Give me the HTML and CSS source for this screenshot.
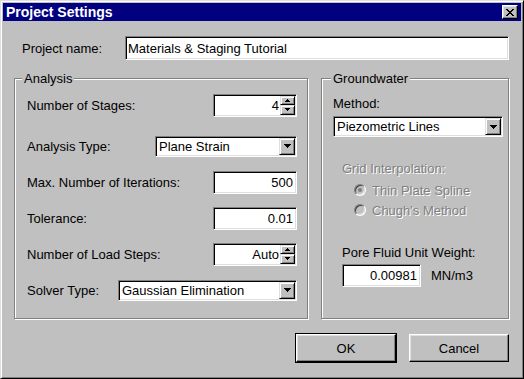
FILE: index.html
```html
<!DOCTYPE html>
<html lang="en">
<head>
  <meta charset="UTF-8" />
  <title>Project Settings</title>
  <link rel="stylesheet" href="styles.css">
</head>
<body>

  <div class="window">
    <div class="titlebar">
      <span class="title">Project Settings</span>
      <button class="close-btn" aria-label="Close">
        <svg width="8" height="7" viewBox="0 0 8 7" shape-rendering="crispEdges">
          <path fill="#000" d="M0 0h2v1H0z M6 0h2v1H6z M1 1h2v1H1z M5 1h2v1H5z M2 2h4v1H2z M3 3h2v1H3z M2 4h4v1H2z M1 5h2v1H1z M5 5h2v1H5z M0 6h2v1H0z M6 6h2v1H6z" />
        </svg>
      </button>
    </div>

    <div class="client">
      <div class="name-row">
        <label for="project-name">Project name:</label>
        <input id="project-name" class="field name-field" type="text" value="Materials &amp; Staging Tutorial" />
      </div>

      <div class="groups">
        <!-- Analysis -->
        <div class="group analysis">
          <div class="group-title">Analysis</div>
          <div class="rows">
            <div class="row">
              <label>Number of Stages:</label>
              <div class="spin">
                <input type="text" value="4" />
                <div class="spin-buttons">
                  <span class="spin-btn">
                    <svg width="5" height="3" viewBox="0 0 5 3" shape-rendering="crispEdges"><path fill="#000" d="M2 0h1v1H2z M1 1h3v1H1z M0 2h5v1H0z" /></svg>
                  </span>
                  <span class="spin-btn">
                    <svg width="5" height="3" viewBox="0 0 5 3" shape-rendering="crispEdges"><path fill="#000" d="M0 0h5v1H0z M1 1h3v1H1z M2 2h1v1H2z" /></svg>
                  </span>
                </div>
              </div>
            </div>

            <div class="row">
              <label>Analysis Type:</label>
              <div class="combo combo-type">
                <span class="combo-value">Plane Strain</span>
                <span class="combo-btn">
                  <svg width="7" height="4" viewBox="0 0 7 4" shape-rendering="crispEdges"><path fill="#000" d="M0 0h7v1H0z M1 1h5v1H1z M2 2h3v1H2z M3 3h1v1H3z" /></svg>
                </span>
              </div>
            </div>

            <div class="row">
              <label>Max. Number of Iterations:</label>
              <input class="field edit" type="text" value="500" />
            </div>

            <div class="row">
              <label>Tolerance:</label>
              <input class="field edit" type="text" value="0.01" />
            </div>

            <div class="row">
              <label>Number of Load Steps:</label>
              <div class="spin">
                <input type="text" value="Auto" />
                <div class="spin-buttons">
                  <span class="spin-btn">
                    <svg width="5" height="3" viewBox="0 0 5 3" shape-rendering="crispEdges"><path fill="#000" d="M2 0h1v1H2z M1 1h3v1H1z M0 2h5v1H0z" /></svg>
                  </span>
                  <span class="spin-btn">
                    <svg width="5" height="3" viewBox="0 0 5 3" shape-rendering="crispEdges"><path fill="#000" d="M0 0h5v1H0z M1 1h3v1H1z M2 2h1v1H2z" /></svg>
                  </span>
                </div>
              </div>
            </div>

            <div class="row">
              <label>Solver Type:</label>
              <div class="combo combo-solver">
                <span class="combo-value">Gaussian Elimination</span>
                <span class="combo-btn">
                  <svg width="7" height="4" viewBox="0 0 7 4" shape-rendering="crispEdges"><path fill="#000" d="M0 0h7v1H0z M1 1h5v1H1z M2 2h3v1H2z M3 3h1v1H3z" /></svg>
                </span>
              </div>
            </div>
          </div>
        </div>

        <!-- Groundwater -->
        <div class="group groundwater">
          <div class="group-title">Groundwater</div>
          <div class="gw-body">
            <div class="method-label">Method:</div>
            <div class="combo combo-method">
              <span class="combo-value">Piezometric Lines</span>
              <span class="combo-btn">
                <svg width="7" height="4" viewBox="0 0 7 4" shape-rendering="crispEdges"><path fill="#000" d="M0 0h7v1H0z M1 1h5v1H1z M2 2h3v1H2z M3 3h1v1H3z" /></svg>
              </span>
            </div>

            <div class="disabled-label">Grid Interpolation:</div>
            <div class="radio-list">
              <div class="radio-row"><span class="radio checked"></span>Thin Plate Spline</div>
              <div class="radio-row"><span class="radio"></span>Chugh's Method</div>
            </div>

            <div class="pore-label">Pore Fluid Unit Weight:</div>
            <div class="pore-row">
              <input class="field edit pore-field" type="text" value="0.00981" />
              <span>MN/m3</span>
            </div>
          </div>
        </div>
      </div>

      <div class="buttons">
        <button class="btn btn-default">OK</button>
        <button class="btn">Cancel</button>
      </div>
    </div>
  </div>

</body>
</html>
```

FILE: styles.css
```css
* {
  margin: 0;
  padding: 0;
  box-sizing: border-box;
  font-family: "Liberation Sans", Arial, sans-serif;
}

html,
body {
  background: #c0c0c0;
}

body {
  font-size: 13px;
  color: #000;
}

input,
button {
  font-size: 13px;
  color: #000;
  outline: none;
}

/* window frame */
.window {
  width: 524px;
  height: 379px;
  border: 1px solid;
  border-color: #dfdfdf #000 #000 #dfdfdf;
  box-shadow: inset 1px 1px #fff, inset -1px -1px #808080;
  padding: 2px;
  display: flex;
  flex-direction: column;
}

.titlebar {
  height: 18px;
  background: #000080;
  display: flex;
  align-items: center;
  justify-content: space-between;
  padding: 0 3px 0 3px;
}

.title {
  color: #fff;
  font-weight: bold;
  font-size: 14px;
  line-height: 18px;
}

.close-btn {
  width: 16px;
  height: 14px;
  background: #c0c0c0;
  border: 1px solid;
  border-color: #fff #000 #000 #fff;
  box-shadow: inset -1px -1px #808080, inset 1px 1px #dfdfdf;
  display: flex;
  align-items: center;
  justify-content: center;
}

.client {
  flex: 1;
  padding: 15px 12px 0 11px;
}

/* sunken edit field */
.field {
  height: 23px;
  border: 1px solid;
  border-color: #808080 #fff #fff #808080;
  box-shadow: inset 1px 1px #000, inset -1px -1px #dfdfdf;
  background: #fff;
  padding: 0 3px 0 2px;
}

.name-row {
  display: flex;
  align-items: center;
  height: 24px;
  padding-left: 8px;
}

.name-row label {
  width: 103px;
}

.name-field {
  flex: 1;
  height: 24px;
}

/* group boxes */
.groups {
  display: flex;
  gap: 13px;
  margin-top: 18px;
  height: 241px;
}

.group {
  border: 1px solid #808080;
  box-shadow: inset 1px 1px #fff, 1px 1px #fff;
}

.analysis {
  width: 294px;
}

.groundwater {
  width: 188px;
}

.group-title {
  width: fit-content;
  margin: -8px 0 0 7px;
  padding: 0 2px;
  line-height: 15px;
  background: #c0c0c0;
}

.groundwater .group-title {
  margin-left: 9px;
}

.rows {
  margin-top: 1px;
  padding: 0 10px 0 12px;
}

.row {
  height: 36px;
  display: flex;
  align-items: center;
  justify-content: space-between;
}

.row:first-child {
  margin-bottom: 5px;
}

.edit {
  width: 84px;
  text-align: right;
}

/* spin box */
.spin {
  width: 84px;
  height: 23px;
  display: flex;
  border: 1px solid;
  border-color: #808080 #fff #fff #808080;
  box-shadow: inset 1px 1px #000, inset -1px -1px #dfdfdf;
  background: #fff;
  padding: 1px;
}

.spin input {
  flex: 1;
  min-width: 0;
  border: 0;
  background: transparent;
  text-align: right;
  padding-right: 1px;
}

.spin-buttons {
  width: 15px;
  display: flex;
  flex-direction: column;
}

.spin-btn {
  flex: 1;
  background: #c0c0c0;
  border: 1px solid;
  border-color: #dfdfdf #000 #000 #dfdfdf;
  box-shadow: inset 1px 1px #fff, inset -1px -1px #808080;
  display: flex;
  align-items: center;
  justify-content: center;
}

/* combo box */
.combo {
  height: 21px;
  display: flex;
  align-items: center;
  border: 1px solid;
  border-color: #808080 #fff #fff #808080;
  box-shadow: inset 1px 1px #000, inset -1px -1px #dfdfdf;
  background: #fff;
  padding: 1px;
}

.combo-value {
  flex: 1;
  padding-left: 2px;
  white-space: nowrap;
}

.combo-btn {
  width: 16px;
  align-self: stretch;
  background: #c0c0c0;
  border: 1px solid;
  border-color: #dfdfdf #000 #000 #dfdfdf;
  box-shadow: inset 1px 1px #fff, inset -1px -1px #808080;
  display: flex;
  align-items: center;
  justify-content: center;
}

.combo-type {
  width: 142px;
}

.combo-solver {
  width: 179px;
}

/* groundwater */
.gw-body {
  padding: 0 5px 0 11px;
}

.method-label {
  margin-top: 10px;
  line-height: 15px;
}

.combo-method {
  margin-top: 5px;
  width: 100%;
}

.disabled-label {
  margin: 24px 0 0 9px;
  line-height: 15px;
  color: #808080;
  text-shadow: 1px 1px 0 #fff;
}

.radio-list {
  margin-top: 4px;
  padding-left: 21px;
}

.radio-row {
  height: 20px;
  display: flex;
  align-items: center;
  gap: 6px;
  color: #808080;
  text-shadow: 1px 1px 0 #fff;
}

.radio {
  width: 12px;
  height: 12px;
  border-radius: 50%;
  border: 1px solid;
  border-color: #808080 #fff #fff #808080;
  box-shadow: inset 1px 1px #404040, inset -1px -1px #dfdfdf;
  background: #c0c0c0;
  display: flex;
  align-items: center;
  justify-content: center;
}

.radio.checked::after {
  content: "";
  width: 4px;
  height: 4px;
  border-radius: 50%;
  background: #808080;
}

.pore-label {
  margin: 25px 0 0 9px;
  line-height: 15px;
}

.pore-row {
  display: flex;
  align-items: center;
  gap: 10px;
  margin: 4px 0 0 9px;
}

.pore-field {
  width: 79px;
}

/* dialog buttons */
.buttons {
  display: flex;
  justify-content: flex-end;
  gap: 13px;
  margin-top: 15px;
}

.btn {
  width: 100px;
  height: 28px;
  background: #c0c0c0;
  border: 1px solid;
  border-color: #fff #000 #000 #fff;
  box-shadow: inset -1px -1px #808080, inset 1px 1px #dfdfdf;
}

.btn-default {
  outline: 1px solid #000;
}
```
